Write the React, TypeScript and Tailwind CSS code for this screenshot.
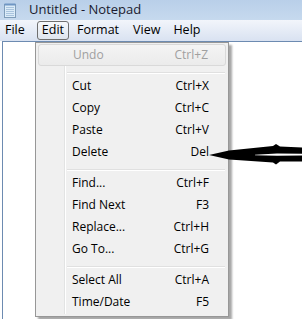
import React from "react";

type Item = { label: string; key: string; disabled?: boolean } | "sep";

const items: Item[] = [
  { label: "Undo", key: "Ctrl+Z", disabled: true },
  "sep",
  { label: "Cut", key: "Ctrl+X" },
  { label: "Copy", key: "Ctrl+C" },
  { label: "Paste", key: "Ctrl+V" },
  { label: "Delete", key: "Del" },
  "sep",
  { label: "Find...", key: "Ctrl+F" },
  { label: "Find Next", key: "F3" },
  { label: "Replace...", key: "Ctrl+H" },
  { label: "Go To...", key: "Ctrl+G" },
  "sep",
  { label: "Select All", key: "Ctrl+A" },
  { label: "Time/Date", key: "F5" },
];

function NotepadIcon() {
  return (
    <svg width="16" height="17" viewBox="0 0 16 17">
      <rect x="2.5" y="2.5" width="11" height="13" fill="#dcecf8" stroke="#7f9db9" />
      <rect x="2.5" y="1.5" width="11" height="2" fill="#6f96c4" />
      {[5, 7, 9, 11, 13].map((y) => (
        <line key={y} x1="4" x2="12" y1={y + 0.5} y2={y + 0.5} stroke="#a9c4de" />
      ))}
    </svg>
  );
}

function Arrow() {
  return (
    <svg width="97" height="25" viewBox="0 0 97 25" className="absolute left-[205px] top-[140px]">
      <path d="M4 15 L24 10.5 L68 6 L71 4 L75 6.5 L97 7.5 L97 21.5 L75 21.5 L71 24.5 L68 22.5 L24 19.5 Z" fill="#000" />
      <path d="M50 14.7 L72 13.4 L97 13.8 L97 15.4 L72 15.8 L50 15.3 Z" fill="#fff" />
    </svg>
  );
}

export default function App() {
  return (
    <div
      className="relative h-[319px] w-[302px] overflow-hidden bg-white text-[12px] text-black"
      style={{ fontFamily: '"Segoe UI", "Open Sans", "Noto Sans", sans-serif' }}
    >
      {/* title bar */}
      <div className="flex h-[20px] items-center gap-[11px] bg-gradient-to-b from-[#b9cfe9] to-[#c6d9ee] pl-[2px]">
        <NotepadIcon />
        <span className="text-[13px] text-[#1a1a2e]">Untitled - Notepad</span>
      </div>

      {/* menu bar */}
      <div className="relative flex h-[21px] items-center bg-gradient-to-b from-[#f2f5fb] to-[#d9e2f1] pl-[5px] text-[12.5px]">
        <span>File</span>
        <span className="ml-[12px] flex h-[19px] items-center rounded-[3px] border border-[#6f6f6f] bg-gradient-to-b from-[#f6f8fb] to-[#dfe5ee] px-[4px]">
          Edit
        </span>
        <span className="ml-[8px]">Format</span>
        <span className="ml-[14px]">View</span>
        <span className="ml-[13px]">Help</span>
      </div>

      {/* editor */}
      <div className="ml-[2px] h-[278px] border-t border-l border-[#6d8bb1] bg-white" />

      {/* edit menu */}
      <div className="absolute left-[35px] top-[42px] w-[194px] border border-[#979797] bg-[#f0f0f0] pt-[1px] pb-[3px] shadow-[3px_3px_2px_rgba(0,0,0,0.35)]">
        <div className="absolute bottom-[2px] left-[28px] top-[2px] w-[2px] border-l border-[#e2e3e3] bg-white" />
        {items.map((it, i) =>
          it === "sep" ? (
            <div key={i} className="relative flex h-[9px] items-end pb-[1px] pl-[31px] pr-[3px]">
              <div className="h-[2px] w-full border-t border-[#e0e0e0] bg-white" />
            </div>
          ) : (
            <div
              key={i}
              className={`relative mx-[2px] flex h-[22px] items-center justify-between pl-[34px] pr-[17px] ${
                it.disabled
                  ? "rounded-[3px] border border-[#d9d9d9] bg-gradient-to-b from-[#f4f4f4] to-[#ebebeb] pl-[33px] pr-[16px] text-[#a0a0a0]"
                  : ""
              }`}
            >
              <span>{it.label}</span>
              <span>{it.key}</span>
            </div>
          )
        )}
      </div>

      <Arrow />
    </div>
  );
}
